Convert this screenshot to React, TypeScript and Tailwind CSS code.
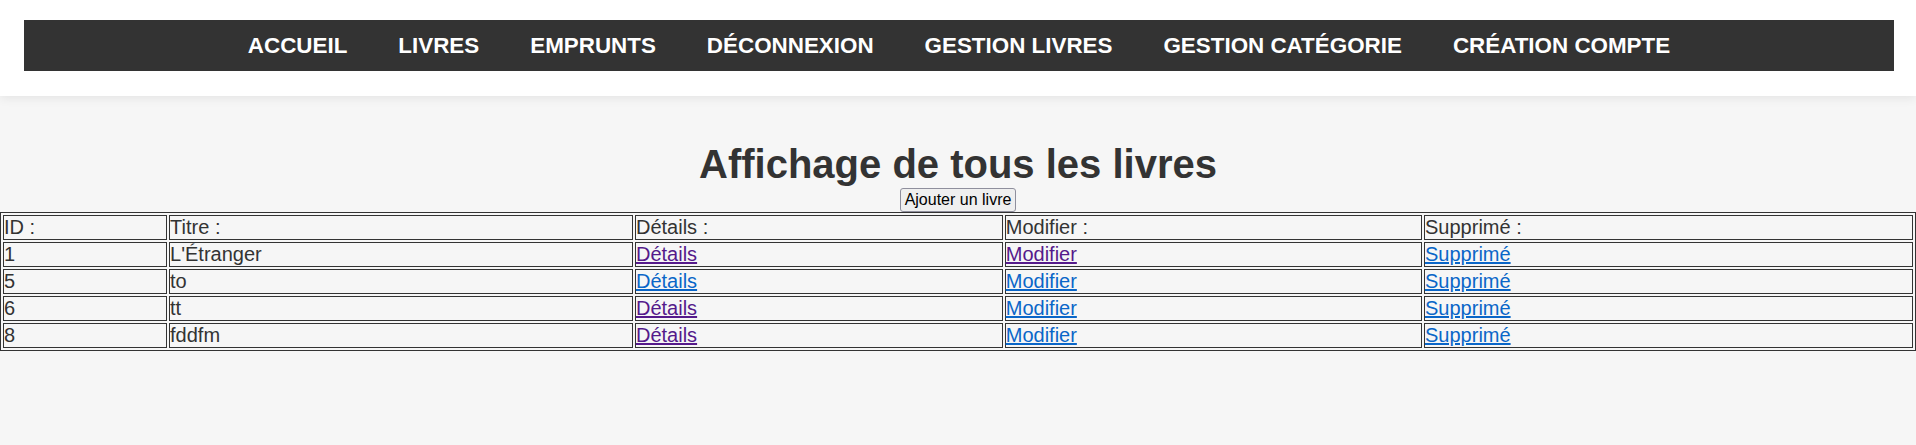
const navItems = [
  'Accueil',
  'Livres',
  'Emprunts',
  'Déconnexion',
  'Gestion livres',
  'Gestion catégorie',
  'Création compte',
]

interface Livre {
  id: number
  titre: string
  detailsVisited: boolean
  modifierVisited: boolean
  supprimeVisited: boolean
}

const livres: Livre[] = [
  { id: 1, titre: "L'Étranger", detailsVisited: true, modifierVisited: true, supprimeVisited: false },
  { id: 5, titre: 'to', detailsVisited: false, modifierVisited: false, supprimeVisited: false },
  { id: 6, titre: 'tt', detailsVisited: true, modifierVisited: false, supprimeVisited: false },
  { id: 8, titre: 'fddfm', detailsVisited: true, modifierVisited: false, supprimeVisited: false },
]

function TableLink({ label, visited }: { label: string; visited: boolean }) {
  return (
    <a href="#" className={`underline ${visited ? 'text-[#551a8b]' : 'text-[#0a66c8]'}`}>
      {label}
    </a>
  )
}

export default function App() {
  const cell = 'border border-[#333] p-0 text-left font-normal align-middle'

  return (
    <div className="min-h-[445px] bg-[#f6f6f6] font-['Liberation_Sans',Arial,sans-serif] text-[#333]">
      <header className="relative z-10 bg-white pt-[20px] pb-[25px] pl-[24px] pr-[22px] shadow-[0_2px_10px_rgba(0,0,0,0.08)]">
        <nav className="flex h-[51px] items-center justify-center gap-[51px] bg-[#333]">
          {navItems.map((item) => (
            <a key={item} href="#" className="text-[22.4px] font-bold uppercase leading-[26px] text-white">
              {item}
            </a>
          ))}
        </nav>
      </header>

      <main className="pt-[45px]">
        <h1 className="text-center text-[40px] font-bold leading-[46px]">Affichage de tous les livres</h1>
        <div className="mt-[1px] flex justify-center">
          <button className="rounded-[3px] border border-[#8f8f9d] bg-[#efefef] px-[4px] py-[2px] text-[16px] leading-[18px] text-black">
            Ajouter un livre
          </button>
        </div>
        <table className="w-full border-separate border-spacing-[2px] border border-[#333] text-[20px] leading-[23px]">
          <thead>
            <tr>
              <td className={cell}>ID :</td>
              <td className={cell}>Titre :</td>
              <td className={cell}>Détails :</td>
              <td className={cell}>Modifier :</td>
              <td className={cell}>Supprimé :</td>
            </tr>
          </thead>
          <tbody>
            {livres.map((livre) => (
              <tr key={livre.id}>
                <td className={cell}>{livre.id}</td>
                <td className={cell}>{livre.titre}</td>
                <td className={cell}>
                  <TableLink label="Détails" visited={livre.detailsVisited} />
                </td>
                <td className={cell}>
                  <TableLink label="Modifier" visited={livre.modifierVisited} />
                </td>
                <td className={cell}>
                  <TableLink label="Supprimé" visited={livre.supprimeVisited} />
                </td>
              </tr>
            ))}
          </tbody>
        </table>
      </main>
    </div>
  )
}
